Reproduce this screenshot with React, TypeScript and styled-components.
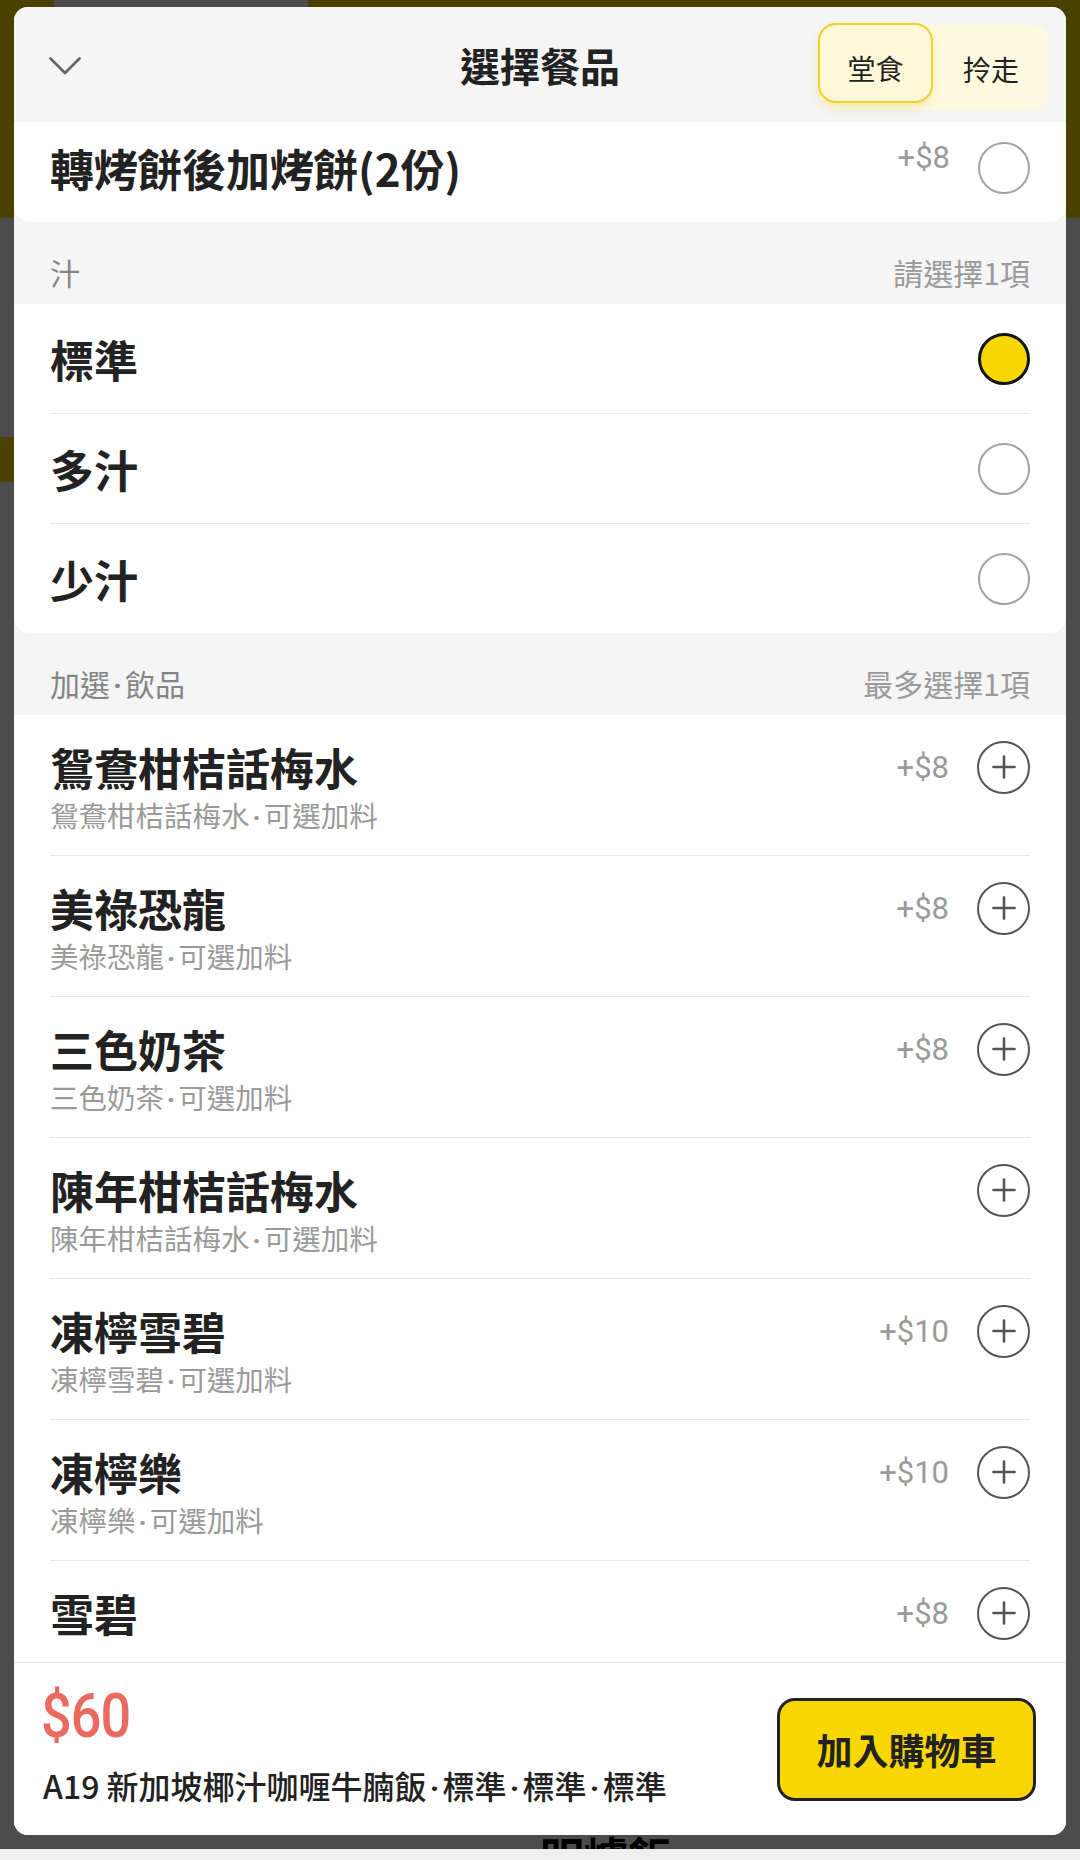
import React from "react";
import styled, { createGlobalStyle } from "styled-components";

const CJK = `"Noto Sans CJK TC", "Noto Sans CJK SC", "Noto Sans", sans-serif`;
const NUM = `Roboto, "Noto Sans CJK TC", sans-serif`;

const GlobalStyle = createGlobalStyle`
  html, body { margin: 0; padding: 0; }
  body { font-family: ${CJK}; background: #ffffff; color: #222; }
  * { box-sizing: border-box; }
  button { font-family: inherit; }
`;

/* ---------- page underneath the overlay ---------- */
const Screen = styled.div`
  width: 1080px;
  height: 1860px;
  display: flex;
  flex-direction: column;
  overflow: hidden;
  background: #ffffff;
`;
const Viewport = styled.div`
  position: relative;
  flex: 1;
  min-height: 0;
  overflow: hidden;
  display: flex;
  flex-direction: column;
`;
const PageHeader = styled.div`
  flex: none;
  height: 218px;
  background: #f9d900;
`;
const SearchTab = styled.div`
  margin-left: 54px;
  width: 254px;
  height: 64px;
  background: #ffffff;
  border-radius: 0 0 22px 22px;
`;
const PageBody = styled.div`
  flex: 1;
  display: flex;
  flex-direction: column;
  padding-top: 219px;
`;
const CategoryMark = styled.div`
  width: 60px;
  height: 45px;
  background: #f9d900;
`;
const PageCaption = styled.div`
  margin-top: auto;
  margin-bottom: -29px;
  padding-left: 540px;
  font-size: 44px;
  line-height: 44px;
  font-weight: 700;
  color: #000;
`;
const SystemBar = styled.div`
  flex: none;
  height: 11px;
  background: #efefef;
`;
const Overlay = styled.div`
  position: absolute;
  inset: 0;
  background: rgba(0, 0, 0, 0.7);
`;

/* ---------- bottom sheet ---------- */
const Sheet = styled.div`
  position: absolute;
  top: 7px;
  left: 14px;
  right: 14px;
  bottom: 14px;
  background: #ffffff;
  border-radius: 14px;
  overflow: hidden;
  display: flex;
  flex-direction: column;
`;
const SheetHeader = styled.header`
  flex: none;
  height: 115px;
  background: #f5f5f5;
  display: grid;
  grid-template-columns: 1fr auto 1fr;
  align-items: center;
  padding: 0 17px;
`;
const CloseButton = styled.button`
  justify-self: start;
  margin-left: 17px;
  margin-top: 3px;
  width: 34px;
  height: 34px;
  padding: 0;
  border: 0;
  background: none;
  display: flex;
  align-items: center;
  justify-content: center;
`;
const Title = styled.h1`
  margin: 0;
  font-size: 40px;
  line-height: 1;
  font-weight: 700;
  color: #222;
`;
const ModeToggle = styled.div`
  justify-self: end;
  margin-top: 6px;
  height: 85px;
  display: flex;
  background: #fffadf;
  border-radius: 18px;
`;
const ModeOption = styled.button<{ $active?: boolean }>`
  width: ${(p) => (p.$active ? 115 : 116)}px;
  height: ${(p) => (p.$active ? 80 : 85)}px;
  margin-top: ${(p) => (p.$active ? -2 : 0)}px;
  padding: ${(p) => (p.$active ? "10px 0 0" : "2px 0 0")};
  border: ${(p) => (p.$active ? "2px solid #f3d02c" : "0")};
  border-radius: 18px;
  background: ${(p) => (p.$active ? "#fff8d8" : "transparent")};
  box-shadow: ${(p) => (p.$active ? "0 6px 10px rgba(190, 160, 0, 0.18)" : "none")};
  font-size: 28px;
  font-weight: 400;
  color: #222;
  display: flex;
  align-items: center;
  justify-content: center;
`;

const ScrollArea = styled.div`
  flex: 1;
  min-height: 0;
  overflow: hidden;
  background: #f5f5f5;
`;
const Group = styled.section<{ $scrolled?: boolean }>`
  background: #ffffff;
  border-radius: 0 0 16px 16px;
  margin-top: ${(p) => (p.$scrolled ? "-9px" : "0")};
`;
const SectionHeader = styled.div`
  height: 82px;
  display: flex;
  justify-content: space-between;
  padding: 30px 36px 12px;
  font-size: 30px;
  line-height: 40px;
`;
const SectionTitle = styled.span`
  height: 40px;
  color: #858585;
`;
const SectionHint = styled.span`
  height: 40px;
  color: #9a9a9a;
`;

const OptionRow = styled.div`
  height: 109px;
  margin: 0 36px;
  display: flex;
  align-items: center;
  justify-content: space-between;
  & + & {
    height: 110px;
    border-top: 1px solid #e8e8e8;
  }
`;
const ItemName = styled.div`
  height: 60px;
  font-size: 44px;
  line-height: 60px;
  font-weight: 700;
  color: #222;
  white-space: nowrap;
`;
const RightSide = styled.div`
  height: 60px;
  display: flex;
  align-items: center;
  gap: 28px;
  flex: none;
`;
const Price = styled.span<{ $lift?: boolean }>`
  font-family: ${NUM};
  font-size: 31px;
  line-height: 1;
  color: #9a9a9a;
  margin-bottom: ${(p) => (p.$lift ? "20px" : "0")};
`;
const Radio = styled.span<{ $checked?: boolean }>`
  width: 52px;
  height: 52px;
  border-radius: 50%;
  border: ${(p) => (p.$checked ? "3px solid #151515" : "2.5px solid #a3a3a3")};
  background: ${(p) => (p.$checked ? "#f8d700" : "#ffffff")};
  flex: none;
`;
const AddButton = styled.span`
  width: 53px;
  height: 53px;
  border-radius: 50%;
  border: 2.5px solid #555;
  display: flex;
  align-items: center;
  justify-content: center;
  flex: none;
`;

const DrinkRow = styled.div`
  height: 140px;
  margin: 0 36px;
  padding: 22px 0;
  display: flex;
  align-items: flex-start;
  justify-content: space-between;
  & + & {
    height: 141px;
    border-top: 1px solid #e8e8e8;
  }
`;
const DrinkText = styled.div`
  display: flex;
  flex-direction: column;
`;
const DrinkSub = styled.div`
  height: 36px;
  font-size: 28.5px;
  line-height: 36px;
  color: #9a9a9a;
  white-space: nowrap;
`;
const Dot = styled.span`
  display: inline-block;
  width: 0.5em;
  line-height: 1;
  text-align: center;
  font-family: Roboto, "Liberation Sans", sans-serif;
  font-weight: 700;
`;

const Footer = styled.footer`
  flex: none;
  height: 173px;
  border-top: 1px solid #e6e6e6;
  background: #ffffff;
  display: flex;
  align-items: center;
  justify-content: space-between;
  padding: 0 30px 0 27px;
`;
const FooterInfo = styled.div`
  display: flex;
  flex-direction: column;
  padding-bottom: 12px;
`;
const Total = styled.div`
  height: 72px;
  font-family: ${NUM};
  font-size: 62px;
  line-height: 72px;
  font-weight: 500;
  letter-spacing: -1px;
  color: #ea6961;
  transform: scaleX(0.87);
  transform-origin: left center;
`;
const Summary = styled.div`
  height: 44px;
  margin-top: 11px;
  padding-left: 2px;
  font-size: 32px;
  line-height: 44px;
  font-weight: 500;
  color: #222;
  white-space: nowrap;
`;
const CartButton = styled.button`
  width: 259px;
  height: 103px;
  border: 3px solid #222;
  border-radius: 18px;
  background: #f8d700;
  font-size: 36px;
  font-weight: 700;
  color: #222;
  display: flex;
  align-items: center;
  justify-content: center;
`;

/* ---------- icons ---------- */
const Chevron = () => (
  <svg width="32" height="18" viewBox="0 0 32 18" fill="none">
    <polyline points="1.5,1.5 16,16 30.5,1.5" stroke="#666" strokeWidth="2.8" strokeLinecap="round" strokeLinejoin="round" />
  </svg>
);
const PlusIcon = () => (
  <svg width="24" height="24" viewBox="0 0 24 24" fill="none">
    <line x1="12" y1="1.5" x2="12" y2="22.5" stroke="#555" strokeWidth="2.6" strokeLinecap="round" />
    <line x1="1.5" y1="12" x2="22.5" y2="12" stroke="#555" strokeWidth="2.6" strokeLinecap="round" />
  </svg>
);

const withDots = (text: string) => {
  const parts = text.split("·");
  return parts.map((p, i) => (
    <React.Fragment key={i}>
      {i > 0 && <Dot>·</Dot>}
      {p}
    </React.Fragment>
  ));
};

const juiceOptions = [
  { name: "標準", checked: true },
  { name: "多汁", checked: false },
  { name: "少汁", checked: false },
];

const drinks: { name: string; sub?: string; price?: string }[] = [
  { name: "鴛鴦柑桔話梅水", sub: "鴛鴦柑桔話梅水·可選加料", price: "+$8" },
  { name: "美祿恐龍", sub: "美祿恐龍·可選加料", price: "+$8" },
  { name: "三色奶茶", sub: "三色奶茶·可選加料", price: "+$8" },
  { name: "陳年柑桔話梅水", sub: "陳年柑桔話梅水·可選加料" },
  { name: "凍檸雪碧", sub: "凍檸雪碧·可選加料", price: "+$10" },
  { name: "凍檸樂", sub: "凍檸樂·可選加料", price: "+$10" },
  { name: "雪碧", price: "+$8" },
];

export default function App() {
  return (
    <>
      <GlobalStyle />
      <Screen>
        <Viewport>
          <PageHeader>
            <SearchTab />
          </PageHeader>
          <PageBody>
            <CategoryMark />
            <PageCaption>明爐飯</PageCaption>
          </PageBody>
          <Overlay />
          <Sheet>
            <SheetHeader>
              <CloseButton aria-label="close">
                <Chevron />
              </CloseButton>
              <Title>選擇餐品</Title>
              <ModeToggle>
                <ModeOption $active>堂食</ModeOption>
                <ModeOption>拎走</ModeOption>
              </ModeToggle>
            </SheetHeader>

            <ScrollArea>
              <Group $scrolled>
                <OptionRow>
                  <ItemName>轉烤餅後加烤餅(2份)</ItemName>
                  <RightSide>
                    <Price $lift>+$8</Price>
                    <Radio />
                  </RightSide>
                </OptionRow>
              </Group>

              <SectionHeader>
                <SectionTitle>汁</SectionTitle>
                <SectionHint>請選擇1項</SectionHint>
              </SectionHeader>
              <Group>
                {juiceOptions.map((o) => (
                  <OptionRow key={o.name}>
                    <ItemName>{o.name}</ItemName>
                    <RightSide>
                      <Radio $checked={o.checked} />
                    </RightSide>
                  </OptionRow>
                ))}
              </Group>

              <SectionHeader>
                <SectionTitle>{withDots("加選·飲品")}</SectionTitle>
                <SectionHint>最多選擇1項</SectionHint>
              </SectionHeader>
              <Group>
                {drinks.map((d) => (
                  <DrinkRow key={d.name}>
                    <DrinkText>
                      <ItemName>{d.name}</ItemName>
                      {d.sub && <DrinkSub>{withDots(d.sub)}</DrinkSub>}
                    </DrinkText>
                    <RightSide>
                      {d.price && <Price>{d.price}</Price>}
                      <AddButton>
                        <PlusIcon />
                      </AddButton>
                    </RightSide>
                  </DrinkRow>
                ))}
              </Group>
            </ScrollArea>

            <Footer>
              <FooterInfo>
                <Total>$60</Total>
                <Summary>{withDots("A19 新加坡椰汁咖喱牛腩飯·標準·標準·標準")}</Summary>
              </FooterInfo>
              <CartButton>加入購物車</CartButton>
            </Footer>
          </Sheet>
        </Viewport>
        <SystemBar />
      </Screen>
    </>
  );
}
